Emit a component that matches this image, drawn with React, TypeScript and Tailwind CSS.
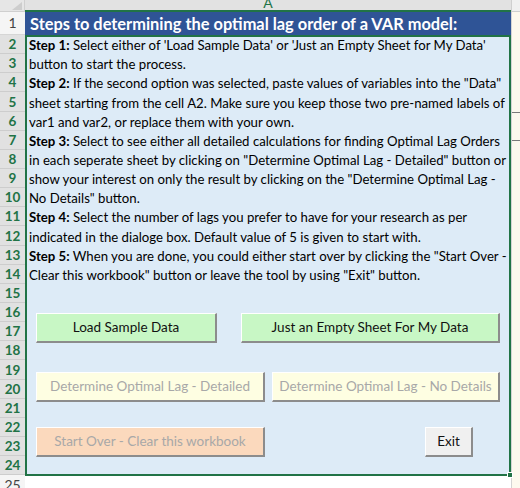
import React from "react";

const ROW_H = "h-[19.15px]";

const steps: { bold?: string; text: string }[] = [
  { bold: "Step 1:", text: " Select either of 'Load Sample Data' or 'Just an Empty Sheet for My Data'" },
  { text: "button to start the process." },
  { bold: "Step 2:", text: " If the second option was selected, paste values of variables into the \"Data\"" },
  { text: "sheet starting from the cell A2. Make sure you keep those two pre-named labels of" },
  { text: "var1 and var2, or replace them with your own." },
  { bold: "Step 3:", text: " Select to see either all detailed calculations for finding Optimal Lag Orders" },
  { text: "in each seperate sheet by clicking on \"Determine Optimal Lag - Detailed\" button or" },
  { text: "show your interest on only the result by clicking on the \"Determine Optimal Lag -" },
  { text: "No Details\" button." },
  { bold: "Step 4:", text: " Select the number of lags you prefer to have for your research as per" },
  { text: "indicated in the dialoge box. Default value of 5 is given to start with." },
  { bold: "Step 5:", text: " When you are done, you could either start over by clicking the \"Start Over -" },
  { text: "Clear this workbook\" button or leave the tool by using \"Exit\" button." },
];

// rows 2..24 sit inside the selected range
const selectedRows = Array.from({ length: 23 }, (_, i) => i + 2);

function SheetButton({
  label,
  className,
  disabled,
}: {
  label: string;
  className: string;
  disabled?: boolean;
}) {
  return (
    <button
      className={
        "flex items-center justify-center h-[30px] border-t border-l border-t-white border-l-white border-r-2 border-b-2 border-r-[#8c8c8c] border-b-[#8c8c8c] text-[13.5px] whitespace-nowrap " +
        (disabled ? "text-[#a8a8a8] " : "text-[#111] ") +
        className
      }
    >
      {label}
    </button>
  );
}

export default function App() {
  return (
    <div className="w-[520px] h-[488px] overflow-hidden bg-white font-['Lato',sans-serif] select-none">
      {/* column headers */}
      <div className="flex h-[11.5px]">
        <div className="w-[25px] bg-[#e6e6e6] border-r border-b border-[#cfcfcf] flex items-end justify-end overflow-hidden">
          <svg width="10" height="8" viewBox="0 0 10 8" className="mr-[2px] mb-[1px]">
            <polygon points="10,0 10,8 0,8" fill="#cdcdcd" />
          </svg>
        </div>
        <div className="w-[486px] bg-[#e2e2e2] border-b-2 border-[#217346] flex justify-center items-end overflow-hidden">
          <span className="text-[#217346] text-[14px] leading-none -mb-[2px] translate-y-[-2px]">A</span>
        </div>
        <div className="flex-1 bg-[#f0f0f0] border-l border-b border-[#cfcfcf]" />
      </div>

      <div className="flex">
        {/* row headers */}
        <div className="w-[25px] flex flex-col">
          <div className="h-[23.5px] bg-[#f5f5f5] border-b border-[#d6d6d6] flex items-end justify-center pb-[1px] text-[#444] text-[14px]">
            1
          </div>
          {selectedRows.map((n) => (
            <div
              key={n}
              className={`${ROW_H} bg-[#e1e1e1] border-b border-[#cdcdcd] flex items-end justify-center text-[#217346] font-bold text-[13.5px] leading-[18px]`}
            >
              {n}
            </div>
          ))}
          <div className="h-[19px] bg-[#f5f5f5] flex items-end justify-center text-[#444] text-[14px] leading-[18px]">
            25
          </div>
        </div>

        {/* column A */}
        <div className="w-[486px] flex flex-col">
          <div className="h-[23.5px] bg-[#2f5496] flex items-end pl-[5px] text-white font-bold text-[16.4px] leading-[22px] whitespace-nowrap">
            Steps to determining the optimal lag order of a VAR model:
          </div>
          <div className="relative h-[440.5px] border-2 border-[#217346] bg-[#ddebf7] flex flex-col">
            <div className="flex flex-col pl-[2px] -mt-[2px]">
              {steps.map((s, i) => (
                <div
                  key={i}
                  className={`${ROW_H} flex items-end text-[13.2px] leading-[17px] text-black whitespace-nowrap`}
                >
                  <span>
                    {s.bold && <b>{s.bold}</b>}
                    {s.text}
                  </span>
                </div>
              ))}
            </div>

            <div className="flex pl-[9px] pr-[9px] mt-[29px] justify-between">
              <SheetButton label="Load Sample Data" className="w-[181px] bg-[#c8f7c5]" />
              <SheetButton label="Just an Empty Sheet For My Data" className="w-[259px] bg-[#c8f7c5]" />
            </div>
            <div className="flex pl-[9px] mt-[29px] gap-[7px]">
              <SheetButton disabled label="Determine Optimal Lag - Detailed" className="w-[229px] bg-[#fefee2]" />
              <SheetButton disabled label="Determine Optimal Lag - No Details" className="w-[228px] bg-[#fefee2]" />
            </div>
            <div className="flex pl-[9px] mt-[25px]">
              <SheetButton disabled label="Start Over - Clear this workbook" className="w-[229px] bg-[#fbd9bd]" />
              <SheetButton label="Exit" className="ml-[160px] w-[48px] bg-[#f0f0f0]" />
            </div>

            {/* fill handle */}
            <div className="absolute -right-[4px] -bottom-[4px] w-[6px] h-[6px] bg-[#217346] border border-white" />
          </div>
        </div>

        {/* column B sliver */}
        <div className="flex-1 bg-[#fdf9ee] border-l border-[#d4d4d4] flex flex-col">
          <div className="h-[100px]" />
          <div className="h-[29px] border-t border-b border-[#7a7a7a]" />
        </div>
      </div>
    </div>
  );
}
